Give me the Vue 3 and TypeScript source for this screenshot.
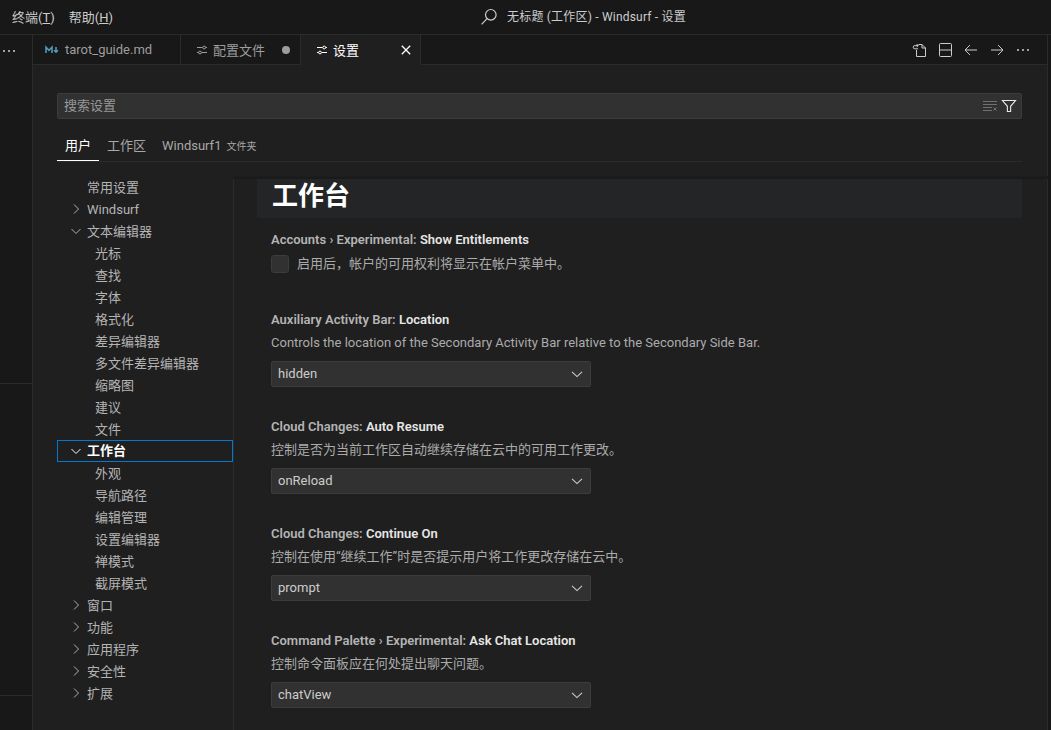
<script setup lang="ts">
interface TocRow { label: string; level: number; chevron?: 'right' | 'down'; active?: boolean }
interface Setting { prefix: string; name: string; desc: string; value: string }

const tocRows: TocRow[] = [
  { label: '常用设置', level: 1 },
  { label: 'Windsurf', level: 1, chevron: 'right' },
  { label: '文本编辑器', level: 1, chevron: 'down' },
  { label: '光标', level: 2 },
  { label: '查找', level: 2 },
  { label: '字体', level: 2 },
  { label: '格式化', level: 2 },
  { label: '差异编辑器', level: 2 },
  { label: '多文件差异编辑器', level: 2 },
  { label: '缩略图', level: 2 },
  { label: '建议', level: 2 },
  { label: '文件', level: 2 },
  { label: '工作台', level: 1, chevron: 'down', active: true },
  { label: '外观', level: 2 },
  { label: '导航路径', level: 2 },
  { label: '编辑管理', level: 2 },
  { label: '设置编辑器', level: 2 },
  { label: '禅模式', level: 2 },
  { label: '截屏模式', level: 2 },
  { label: '窗口', level: 1, chevron: 'right' },
  { label: '功能', level: 1, chevron: 'right' },
  { label: '应用程序', level: 1, chevron: 'right' },
  { label: '安全性', level: 1, chevron: 'right' },
  { label: '扩展', level: 1, chevron: 'right' }
]

const settings: Setting[] = [
  { prefix: 'Auxiliary Activity Bar: ', name: 'Location', desc: 'Controls the location of the Secondary Activity Bar relative to the Secondary Side Bar.', value: 'hidden' },
  { prefix: 'Cloud Changes: ', name: 'Auto Resume', desc: '控制是否为当前工作区自动继续存储在云中的可用工作更改。', value: 'onReload' },
  { prefix: 'Cloud Changes: ', name: 'Continue On', desc: '控制在使用“继续工作”时是否提示用户将工作更改存储在云中。', value: 'prompt' },
  { prefix: 'Command Palette › Experimental: ', name: 'Ask Chat Location', desc: '控制命令面板应在何处提出聊天问题。', value: 'chatView' }
]
</script>

<template>
  <div class="app">
    <header class="titlebar">
      <nav class="menu">
        <span>终端(<u>T</u>)</span>
        <span>帮助(<u>H</u>)</span>
      </nav>
      <div class="title">
        <svg class="search-glyph" width="18" height="18" viewBox="0 0 18 18" fill="none" stroke="#cccccc" stroke-width="1.2">
          <circle cx="10.8" cy="6.8" r="5.3" />
          <path d="M7 10.6 1.6 16.4" />
        </svg>
        <span class="title-text">无标题 (工作区) - Windsurf - 设置</span>
      </div>
    </header>

    <div class="body">
      <aside class="rail">
        <div class="rail-dots"><i></i><i></i><i></i></div>
        <div class="rail-sec rail-a"></div>
        <div class="rail-sec rail-b"></div>
      </aside>

      <main class="main">
        <div class="tabs">
          <div class="tab tab-md">
            <svg width="14" height="10" viewBox="0 0 14 10" fill="none" stroke="#519aba" stroke-width="1.6">
              <path d="M1 8V2.2L4 5.4 7 2.2V8" />
              <path d="M11 2v5M9 5.2l2 2 2-2" />
            </svg>
            <span>tarot_guide.md</span>
          </div>
          <div class="tab tab-conf">
            <svg width="12" height="12" viewBox="0 0 12 12" fill="none" stroke="#9d9d9d" stroke-width="1">
              <path d="M1 3.5h5.5M9.8 3.5H11M1 8.5h1.4M5.6 8.5H11" />
              <circle cx="8.2" cy="3.5" r="1.4" />
              <circle cx="4" cy="8.5" r="1.4" />
            </svg>
            <span class="tab-label">配置文件</span>
            <i class="dirty"></i>
          </div>
          <div class="tab tab-active">
            <svg width="12" height="12" viewBox="0 0 12 12" fill="none" stroke="#ffffff" stroke-width="1">
              <path d="M1 3.5h5.5M9.8 3.5H11M1 8.5h1.4M5.6 8.5H11" />
              <circle cx="8.2" cy="3.5" r="1.4" />
              <circle cx="4" cy="8.5" r="1.4" />
            </svg>
            <span class="tab-label">设置</span>
            <svg class="close" width="10" height="10" viewBox="0 0 10 10" fill="none" stroke="#ffffff" stroke-width="1.3">
              <path d="M.8.8l8.4 8.4M9.2.8.8 9.2" />
            </svg>
          </div>
          <div class="tab-actions">
            <svg width="16" height="16" viewBox="-1 0 16 16" fill="none" stroke="#cccccc" stroke-width="1">
              <path d="M6.5 2.5H10l3.5 3.5v8.5h-9V8" />
              <path d="M10 2.5V6h3.5" />
              <path d="M6 6.8H2.8a1.6 1.6 0 0 1 0-3.2H6M4.6 2 6.2 3.6 4.6 5.2" />
            </svg>
            <svg width="16" height="16" viewBox="0 0 16 16" fill="none" stroke="#cccccc" stroke-width="1">
              <rect x="2.5" y="1.5" width="12" height="13" rx="1" />
              <path d="M2.5 8h12" />
            </svg>
            <svg width="16" height="16" viewBox="0 0 16 16" fill="none" stroke="#cccccc" stroke-width="1">
              <path d="M14 8H2.2M7 3 2 8l5 5" />
            </svg>
            <svg width="16" height="16" viewBox="0 0 16 16" fill="none" stroke="#cccccc" stroke-width="1">
              <path d="M2 8h11.8M9 3l5 5-5 5" />
            </svg>
            <svg width="16" height="16" viewBox="0 0 16 16" fill="#cccccc">
              <circle cx="3" cy="8" r="1" /><circle cx="8" cy="8" r="1" /><circle cx="13" cy="8" r="1" />
            </svg>
          </div>
        </div>

        <section class="editor">
          <div class="searchbox">
            <span class="placeholder">搜索设置</span>
            <svg class="clear" width="16" height="12" viewBox="0 0 16 12" fill="none" stroke="#6f6f6f" stroke-width="1">
              <path d="M1 1.5h14M1 4.5h14M1 7.5h9M1 10.5h9" />
              <path d="M11.5 7.5l3 3M14.5 7.5l-3 3" />
            </svg>
            <svg width="16" height="16" viewBox="0 0 16 16" fill="none" stroke="#e8e8e8" stroke-width="1.1">
              <path d="M1.5 2.5h13L9.6 8.3v5.2H6.4V8.3z" />
            </svg>
          </div>

          <div class="scope-tabs">
            <span class="scope scope-on">用户</span>
            <span class="scope">工作区</span>
            <span class="scope">Windsurf1<small>文件夹</small></span>
          </div>

          <div class="split">
            <ul class="toc">
              <li v-for="row in tocRows" :key="row.label" class="toc-row" :class="[`lv${row.level}`, { active: row.active }]">
                <svg v-if="row.chevron" class="chev" width="16" height="16" viewBox="0 0 16 16" fill="none" :stroke="row.active ? '#ffffff' : '#b0b0b0'" stroke-width="1">
                  <path v-if="row.chevron === 'right'" d="M6 3.5 10.5 8 6 12.5" />
                  <path v-else d="M3.5 6 8 10.5 12.5 6" />
                </svg>
                <span>{{ row.label }}</span>
              </li>
            </ul>

            <div class="panel">
              <h2 class="heading">工作台</h2>

              <div class="setting setting-check">
                <div class="s-title">Accounts › Experimental: <b>Show Entitlements</b></div>
                <div class="check-row">
                  <i class="checkbox"></i>
                  <span class="check-label">启用后，帐户的可用权利将显示在帐户菜单中。</span>
                </div>
              </div>

              <div v-for="item in settings" :key="item.name" class="setting">
                <div class="s-title">{{ item.prefix }}<b>{{ item.name }}</b></div>
                <div class="s-desc">{{ item.desc }}</div>
                <div class="select">
                  <span class="select-value">{{ item.value }}</span>
                  <svg width="16" height="16" viewBox="0 0 16 16" fill="none" stroke="#cccccc" stroke-width="1.1">
                    <path d="M3 5.8 8 10.6l5-4.8" />
                  </svg>
                </div>
              </div>
            </div>
          </div>
        </section>
      </main>

      <aside class="rail-right"></aside>
    </div>
  </div>
</template>

<style scoped>
.app {
  width: 1051px;
  height: 730px;
  overflow: hidden;
  display: flex;
  flex-direction: column;
  background: #1f1f1f;
  color: #cccccc;
  font-family: Roboto, "Noto Sans CJK SC", sans-serif;
  font-size: 13px;
}
.titlebar {
  height: 35px;
  flex: none;
  box-sizing: border-box;
  background: #181818;
  border-bottom: 1px solid #2b2b2b;
  display: flex;
  align-items: center;
  position: relative;
}
.menu {
  display: flex;
  gap: 14px;
  padding-left: 12px;
  font-size: 13px;
  margin-top: -1px;
}
.title {
  position: absolute;
  left: 480px;
  top: 8px;
  display: flex;
  align-items: center;
  gap: 9px;
  font-size: 12px;
  line-height: 18px;
}
.title-text { letter-spacing: 0.2px; }
.body {
  flex: 1;
  min-height: 0;
  display: flex;
}
.rail {
  width: 33px;
  flex: none;
  box-sizing: border-box;
  background: #181818;
  border-right: 1px solid #2b2b2b;
  position: relative;
}
.rail-dots {
  display: flex;
  gap: 3px;
  padding: 15px 0 0 3px;
}
.rail-dots i {
  width: 2px;
  height: 2px;
  background: #cccccc;
  border-radius: 50%;
}
.rail-sec {
  position: absolute;
  left: 0;
  right: 0;
  height: 1px;
  background: #2b2b2b;
}
.rail-a { top: 348px; }
.rail-b { top: 660px; }
.rail-right {
  width: 4px;
  flex: none;
  box-sizing: border-box;
  background: #181818;
  border-left: 1px solid #2b2b2b;
}
.main {
  flex: 1;
  min-width: 0;
  display: flex;
  flex-direction: column;
}
.tabs {
  height: 30px;
  flex: none;
  box-sizing: border-box;
  display: flex;
  background: #181818;
  border-bottom: 1px solid #2b2b2b;
}
.tab {
  height: 30px;
  box-sizing: border-box;
  display: flex;
  align-items: center;
  background: #181818;
  border-right: 1px solid #2b2b2b;
  border-bottom: 1px solid #2b2b2b;
  color: #9d9d9d;
}
.tab-md {
  width: 148px;
  padding-left: 12px;
  gap: 6px;
}
.tab-conf {
  width: 120px;
  padding-left: 15px;
  gap: 5px;
}
.tab-active {
  width: 120px;
  padding-left: 15px;
  gap: 5px;
  color: #ffffff;
  background: #1f1f1f;
  border-bottom-color: #1f1f1f;
}
.tab-label { flex: 1; }
.dirty {
  width: 8px;
  height: 8px;
  border-radius: 50%;
  background: #9d9d9d;
  margin-right: 10px;
}
.close { margin-right: 9px; }
.tab-actions {
  margin-left: auto;
  height: 29px;
  display: flex;
  align-items: center;
  gap: 10px;
  padding-right: 16px;
}
.editor {
  flex: 1;
  min-height: 0;
  display: flex;
  flex-direction: column;
  padding: 28px 0 0 24px;
}
.searchbox {
  width: 965px;
  height: 26px;
  box-sizing: border-box;
  flex: none;
  background: #313131;
  border: 1px solid #3c3c3c;
  border-radius: 2px;
  display: flex;
  align-items: center;
  padding: 0 4px 0 6px;
  gap: 3px;
}
.placeholder {
  flex: 1;
  color: #989898;
  padding-bottom: 4px;
}
.scope-tabs {
  width: 965px;
  height: 43px;
  flex: none;
  box-sizing: border-box;
  display: flex;
  border-bottom: 1px solid #2b2b2b;
  padding-top: 14px;
}
.scope {
  height: 28px;
  box-sizing: border-box;
  padding: 0 8px;
  line-height: 26px;
  color: #a8a8a8;
  white-space: nowrap;
}
.scope-on {
  color: #ffffff;
  border-bottom: 1px solid #ffffff;
}
.scope small {
  font-size: 10px;
  margin-left: 5px;
}
.split {
  flex: 1;
  min-height: 0;
  display: flex;
  padding-top: 15px;
}
.toc {
  width: 176px;
  flex: none;
  list-style: none;
  margin: -1px 0 0;
  padding: 0;
}
.toc-row {
  height: 22px;
  box-sizing: border-box;
  line-height: 24px;
  position: relative;
  color: #b4b4b4;
  white-space: nowrap;
}
.lv1 { padding-left: 30px; }
.lv2 { padding-left: 38px; }
.chev {
  position: absolute;
  left: 11px;
  top: 3px;
}
.active {
  outline: 1px solid #0078d4;
  outline-offset: -1px;
  color: #ffffff;
  font-weight: 700;
  line-height: 22px;
}
.panel {
  flex: 1;
  min-width: 0;
  box-sizing: border-box;
  border-left: 1px solid #2b2b2b;
  padding-left: 23px;
  position: relative;
}
.panel::before {
  content: "";
  position: absolute;
  left: -1px;
  width: 815px;
  top: -1px;
  height: 3px;
  background: linear-gradient(#1d1d1d, #191919);
}
.heading {
  width: 765px;
  height: 39px;
  box-sizing: border-box;
  margin: 2px 0 0;
  padding-left: 15px;
  background: #242527;
  color: #ffffff;
  font-size: 26px;
  font-weight: 700;
  line-height: 34px;
}
.setting {
  padding-left: 14px;
  height: 107px;
  box-sizing: border-box;
}
.setting-check {
  height: 92px;
  padding-top: 12px;
}
.s-title {
  height: 20px;
  line-height: 20px;
  font-size: 13px;
  font-weight: 600;
  color: #b4b4b4;
}
.s-title b {
  color: #e6e6e6;
  font-weight: 600;
}
.s-desc {
  margin-top: 3px;
  height: 20px;
  line-height: 20px;
  color: #ababab;
  white-space: nowrap;
}
.check-row {
  display: flex;
  align-items: center;
  gap: 8px;
  color: #ababab;
  margin-top: 3px;
}
.check-label { padding-bottom: 2px; }
.checkbox {
  width: 18px;
  height: 18px;
  box-sizing: border-box;
  background: #313131;
  border: 1px solid #3c3c3c;
  border-radius: 3px;
}
.select {
  width: 320px;
  height: 26px;
  box-sizing: border-box;
  margin-top: 8px;
  background: #313131;
  border: 1px solid #3c3c3c;
  border-radius: 2px;
  display: flex;
  align-items: center;
  justify-content: space-between;
  padding: 0 5px 0 6px;
}
.select-value { padding-bottom: 2px; }
</style>

<style>
html, body { margin: 0; background: #1f1f1f; }
</style>
